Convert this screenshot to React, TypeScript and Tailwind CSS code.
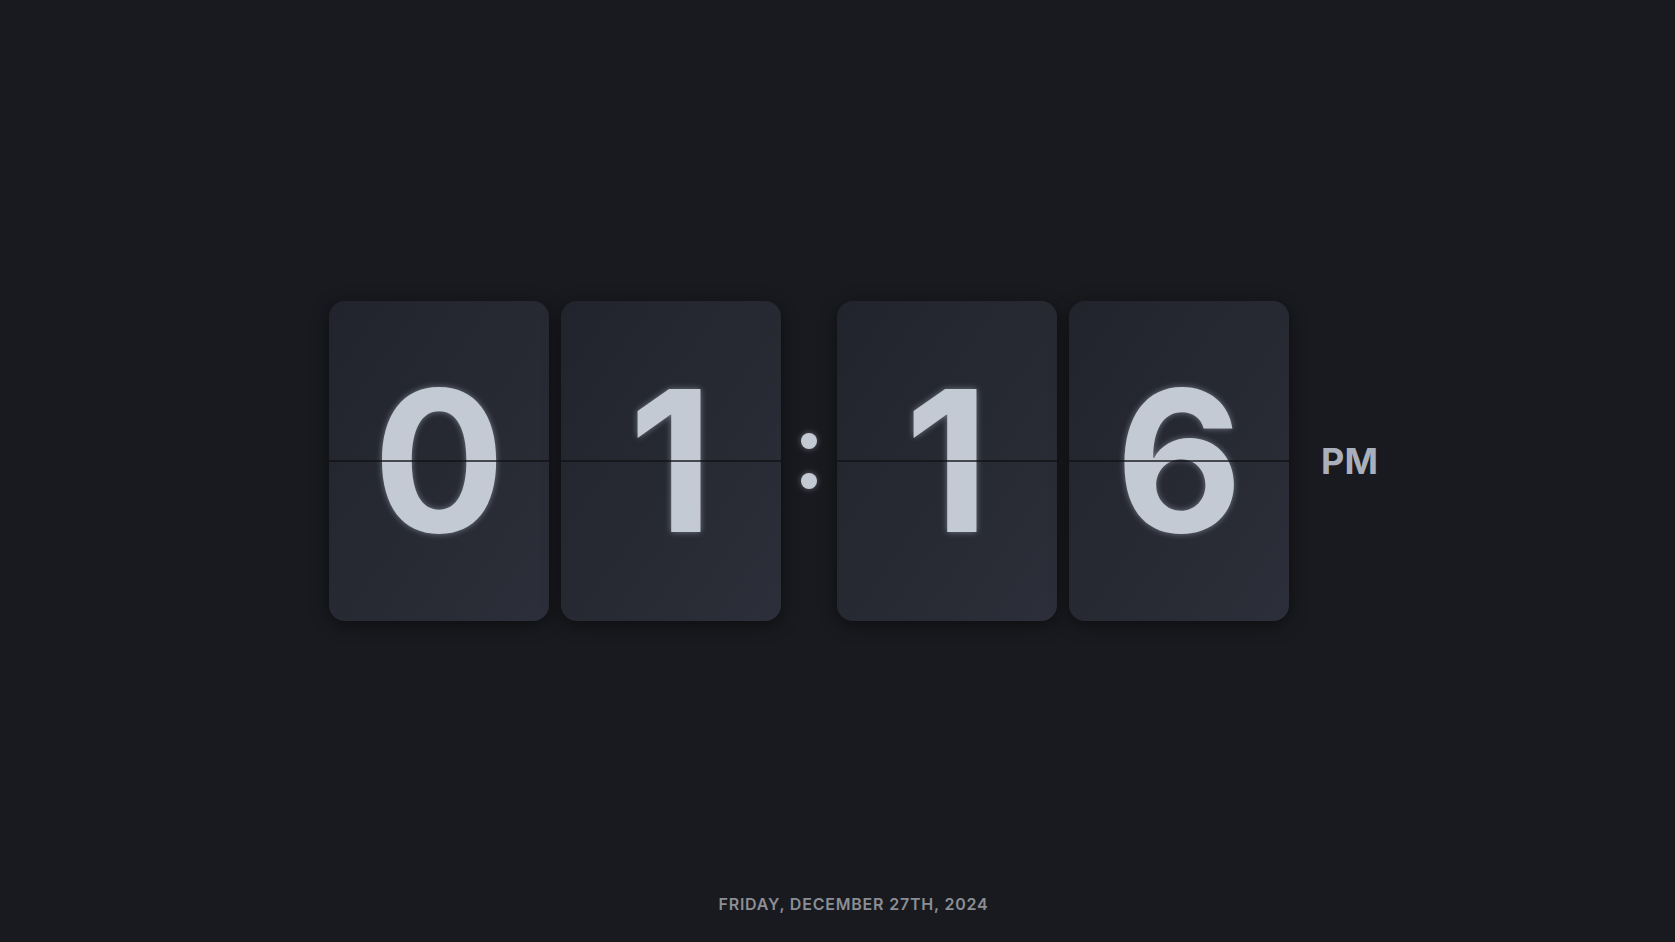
import React from "react";

function Card({ d }: { d: string }) {
  return (
    <div className="relative flex h-[320px] w-[220px] items-center justify-center overflow-hidden rounded-2xl bg-gradient-to-br from-[#21242c] to-[#2c2f39] shadow-[0_4px_18px_rgba(0,0,0,0.45)]">
      <span className="text-[196px] font-bold leading-none text-[#c3cad4] [text-shadow:0_0_6px_rgba(210,220,235,0.45)]">
        {d}
      </span>
      <div className="absolute left-0 right-0 top-1/2 h-[2px] -translate-y-1/2 bg-[#101114]/70" />
    </div>
  );
}

export default function App() {
  return (
    <div
      className="flex h-[942px] w-full flex-col items-center bg-[#191a1f] pl-[32px] pt-[301px]"
      style={{ fontFamily: "Inter, 'Noto Sans', sans-serif" }}
    >
      <div className="flex items-center">
        <div className="flex gap-3">
          <Card d="0" />
          <Card d="1" />
        </div>
        <div className="flex w-[56px] flex-col items-center gap-6">
          <div className="h-4 w-4 rounded-full bg-[#c3cad4] shadow-[0_0_6px_rgba(210,220,235,0.4)]" />
          <div className="h-4 w-4 rounded-full bg-[#c3cad4] shadow-[0_0_6px_rgba(210,220,235,0.4)]" />
        </div>
        <div className="flex gap-3">
          <Card d="1" />
          <Card d="6" />
        </div>
        <div className="ml-8 text-4xl font-bold text-[#a9b0bb]">PM</div>
      </div>
      <div className="mt-auto pb-[26px] text-base font-semibold tracking-wider text-[#8b8e95]">
        FRIDAY, DECEMBER 27TH, 2024
      </div>
    </div>
  );
}
